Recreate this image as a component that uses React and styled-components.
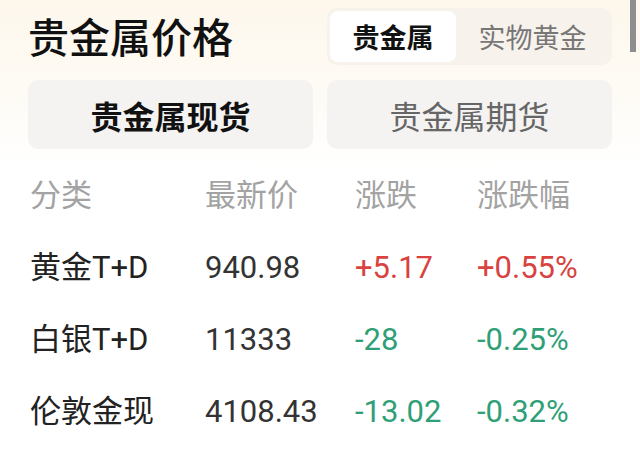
import React from "react";
import styled, { createGlobalStyle } from "styled-components";

const Global = createGlobalStyle`
  html, body { margin: 0; padding: 0; background: #fff; }
  body { font-family: Roboto, "Noto Sans CJK SC", sans-serif; }
`;

const Page = styled.div`
  position: relative;
  width: 640px;
  height: 463px;
  overflow: hidden;
  background: linear-gradient(180deg, #fdf7ec 0px, #fefbf5 90px, #ffffff 170px);
  box-sizing: border-box;
  padding: 8px 28px 0 28px;
`;

const ScrollThumb = styled.div`
  position: absolute;
  right: 4px;
  top: 0;
  width: 6px;
  height: 52px;
  background: #8e8e8e;
`;

const Header = styled.div`
  display: flex;
  align-items: center;
  justify-content: space-between;
  height: 57px;
`;

const Title = styled.h1`
  margin: -2px 0 0 0;
  font-family: "Noto Sans CJK SC", sans-serif;
  font-size: 41px;
  font-weight: 500;
  color: #111;
  line-height: 1;
`;

const Segmented = styled.div`
  display: flex;
  width: 285px;
  height: 57px;
  box-sizing: border-box;
  padding: 3px;
  background: #f7f2ec;
  border-radius: 10px;
`;

const Segment = styled.div`
  flex: ${(p) => (p.$active ? "0 0 126px" : "1")};
  display: flex;
  align-items: center;
  justify-content: center;
  border-radius: 8px;
  background: ${(p) => (p.$active ? "#ffffff" : "transparent")};
  font-family: "Noto Sans CJK SC", sans-serif;
  font-size: 27px;
  font-weight: ${(p) => (p.$active ? 700 : 400)};
  color: ${(p) => (p.$active ? "#111" : "#777")};
`;

const ButtonRow = styled.div`
  display: flex;
  gap: 14px;
  margin-top: 15px;
`;

const MarketButton = styled.div`
  flex: 0 0 285px;
  height: 69px;
  display: flex;
  align-items: center;
  justify-content: center;
  border-radius: 10px;
  background: #f4f3f2;
  font-family: "Noto Sans CJK SC", sans-serif;
  font-size: 32px;
  font-weight: ${(p) => (p.$active ? 700 : 400)};
  color: ${(p) => (p.$active ? "#111" : "#666")};
`;

const Table = styled.div`
  margin-top: 10px;
  padding-left: 2px;
`;

const Row = styled.div`
  display: grid;
  grid-template-columns: 175px 150px 122px 1fr;
  align-items: center;
  height: 72px;
`;

const Cell = styled.div`
  font-size: 31px;
  line-height: 1;
  white-space: nowrap;
  color: ${(p) =>
    p.$tone === "head"
      ? "#a3a3a3"
      : p.$tone === "up"
      ? "#d8423f"
      : p.$tone === "down"
      ? "#2f9f78"
      : p.$tone === "name"
      ? "#222"
      : "#333"};
`;

const rows = [
  { name: "黄金T+D", price: "940.98", chg: "+5.17", pct: "+0.55%", up: true },
  { name: "白银T+D", price: "11333", chg: "-28", pct: "-0.25%", up: false },
  { name: "伦敦金现", price: "4108.43", chg: "-13.02", pct: "-0.32%", up: false },
];

export default function App() {
  return (
    <>
      <Global />
      <Page>
        <ScrollThumb />
        <Header>
          <Title>贵金属价格</Title>
          <Segmented>
            <Segment $active>贵金属</Segment>
            <Segment>实物黄金</Segment>
          </Segmented>
        </Header>
        <ButtonRow>
          <MarketButton $active>贵金属现货</MarketButton>
          <MarketButton>贵金属期货</MarketButton>
        </ButtonRow>
        <Table>
          <Row>
            <Cell $tone="head">分类</Cell>
            <Cell $tone="head">最新价</Cell>
            <Cell $tone="head">涨跌</Cell>
            <Cell $tone="head">涨跌幅</Cell>
          </Row>
          {rows.map((r) => (
            <Row key={r.name}>
              <Cell $tone="name">{r.name}</Cell>
              <Cell>{r.price}</Cell>
              <Cell $tone={r.up ? "up" : "down"}>{r.chg}</Cell>
              <Cell $tone={r.up ? "up" : "down"}>{r.pct}</Cell>
            </Row>
          ))}
        </Table>
      </Page>
    </>
  );
}
